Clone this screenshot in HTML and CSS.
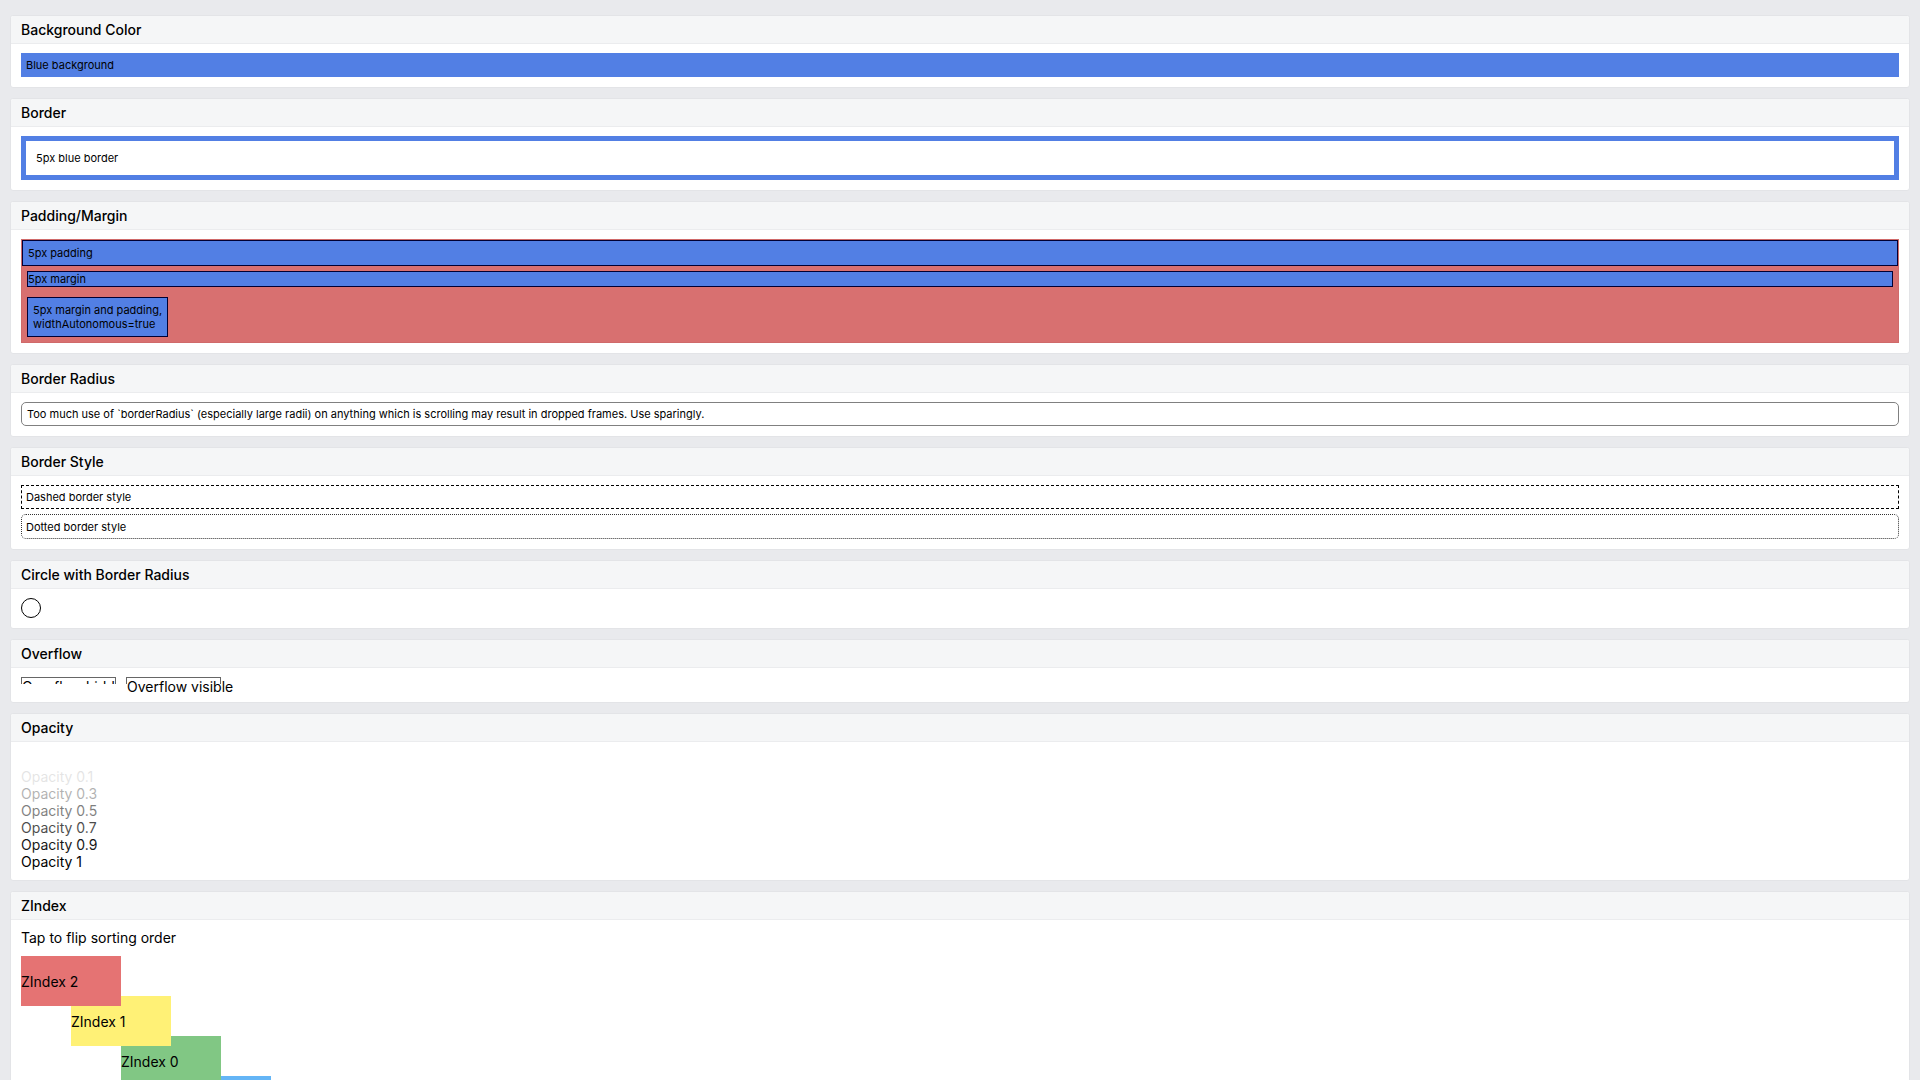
FILE: index.html
```html
<!DOCTYPE html>
<html lang="en">
<head>
  <meta charset="UTF-8" />
  <meta name="viewport" content="width=device-width, initial-scale=1" />
  <title>View</title>
  <link rel="stylesheet" href="styles.css">
</head>
<body>

  <div class="page">

    <div class="block">
      <div class="block-title"><h2>Background Color</h2></div>
      <div class="block-body">
        <div class="bg-blue"><span class="small">Blue background</span></div>
      </div>
    </div>

    <div class="block">
      <div class="block-title"><h2>Border</h2></div>
      <div class="block-body">
        <div class="blue-border"><span class="small">5px blue border</span></div>
      </div>
    </div>

    <div class="block">
      <div class="block-title"><h2>Padding/Margin</h2></div>
      <div class="block-body">
        <div class="pm-wrap">
          <div class="box pad"><span class="small">5px padding</span></div>
          <div class="box marg"><span class="small">5px margin</span></div>
          <div class="box marg pad auto">
            <span class="small">5px margin and padding,</span>
            <span class="small">widthAutonomous=true</span>
          </div>
        </div>
      </div>
    </div>

    <div class="block">
      <div class="block-title"><h2>Border Radius</h2></div>
      <div class="block-body">
        <div class="rounded"><span class="small">Too much use of `borderRadius` (especially large radii) on anything which is scrolling may result in dropped frames. Use sparingly.</span></div>
      </div>
    </div>

    <div class="block">
      <div class="block-title"><h2>Border Style</h2></div>
      <div class="block-body">
        <div class="dashed"><span class="small">Dashed border style</span></div>
        <div class="dotted"><span class="small">Dotted border style</span></div>
      </div>
    </div>

    <div class="block">
      <div class="block-title"><h2>Circle with Border Radius</h2></div>
      <div class="block-body">
        <div class="circle"></div>
      </div>
    </div>

    <div class="block">
      <div class="block-title"><h2>Overflow</h2></div>
      <div class="block-body">
        <div class="overflow-row">
          <div class="ov-box hidden">
            <div class="ov-inner"><span class="txt">Overflow hidden</span></div>
          </div>
          <div class="ov-box"><span class="txt">Overflow visible</span></div>
        </div>
      </div>
    </div>

    <div class="block">
      <div class="block-title"><h2>Opacity</h2></div>
      <div class="block-body">
        <div class="txt op-0">Opacity 0</div>
        <div class="txt op-1">Opacity 0.1</div>
        <div class="txt op-3">Opacity 0.3</div>
        <div class="txt op-5">Opacity 0.5</div>
        <div class="txt op-7">Opacity 0.7</div>
        <div class="txt op-9">Opacity 0.9</div>
        <div class="txt">Opacity 1</div>
      </div>
    </div>

    <div class="block">
      <div class="block-title"><h2>ZIndex</h2></div>
      <div class="block-body zstack">
        <div class="txt tap">Tap to flip sorting order</div>
        <div class="zbox z-red"><span class="txt">ZIndex 2</span></div>
        <div class="zbox z-yellow"><span class="txt">ZIndex 1</span></div>
        <div class="zbox z-green"><span class="txt">ZIndex 0</span></div>
        <div class="zbox z-blue"><span class="txt">ZIndex -1</span></div>
      </div>
    </div>

  </div>

</body>
</html>
```

FILE: styles.css
```css
body {
  margin: 0;
  background: #e9eaed;
  font-family: Inter, "Noto Sans", sans-serif;
  color: #000;
}

.page {
  display: flex;
  flex-direction: column;
  gap: 10px;
  padding: 15px 10px;
}

/* Tarjetas */
.block {
  background: #fff;
  border: 1px solid #e3e4e7;
  border-radius: 3px;
  overflow: hidden;
}

.block-title {
  background: #f5f6f7;
  border-bottom: 1px solid #ebecee;
  padding: 5px 10px;
}

.block-title h2 {
  margin: 0;
  font-size: 14px;
  font-weight: 500;
  line-height: 17px;
}

.block-body {
  padding: 9px 10px 10px;
}

.small {
  display: block;
  font-size: 11px;
  line-height: 14px;
}

.txt {
  font-size: 14px;
  line-height: 17px;
}

/* Background / border */
.bg-blue {
  background: #527fe4;
  padding: 5px;
}

.blue-border {
  border: 5px solid #527fe4;
  padding: 10px;
}

/* Padding / margin */
.pm-wrap {
  background: #d87070;
  border: 1px solid #d06a6a;
  display: flex;
  flex-direction: column;
}

.box {
  background: #527fe4;
  border: 1px solid #000033;
}

.box.pad {
  padding: 5px;
}

.box.marg {
  margin: 5px;
}

.box.auto {
  align-self: flex-start;
}

.rounded {
  border: 1px solid #808080;
  border-radius: 5px;
  padding: 4px 5px;
}

.dashed {
  border: 1px dashed #000;
  padding: 4px 4px;
}

.dotted {
  margin-top: 5px;
  border: 1px dotted #333;
  border-radius: 5px;
  padding: 5px 4px 4px;
}

.circle {
  width: 20px;
  height: 20px;
  border: 1px solid #000;
  border-radius: 50%;
  box-sizing: border-box;
}

/* Overflow */
.overflow-row {
  display: flex;
  gap: 10px;
  padding-bottom: 8px;
}

.ov-box {
  width: 95px;
  height: 7px;
  box-sizing: border-box;
  border: 1px solid #666;
  border-bottom: 0;
  white-space: nowrap;
}

.ov-box .txt {
  display: block;
}

.ov-box.hidden {
  overflow: hidden;
}

.ov-inner {
  width: 200px;
  height: 20px;
}

/* Opacity */
.op-0 { opacity: 0; }
.op-1 { opacity: 0.1; }
.op-3 { opacity: 0.3; }
.op-5 { opacity: 0.5; }
.op-7 { opacity: 0.7; }
.op-9 { opacity: 0.9; }

/* ZIndex */
.zstack {
  position: relative;
  z-index: 0;
}

.tap {
  margin-bottom: 10px;
}

.zbox {
  position: relative;
  width: 100px;
  height: 50px;
  margin-top: -10px;
  display: flex;
  flex-direction: column;
  justify-content: space-around;
}

.z-red {
  margin-top: 0;
  background: #e57373;
  z-index: 2;
}

.z-yellow {
  margin-left: 50px;
  background: #fff176;
  z-index: 1;
}

.z-green {
  margin-left: 100px;
  background: #81c784;
  z-index: 0;
}

.z-blue {
  margin-left: 150px;
  background: #64b5f6;
  z-index: -1;
}
```
